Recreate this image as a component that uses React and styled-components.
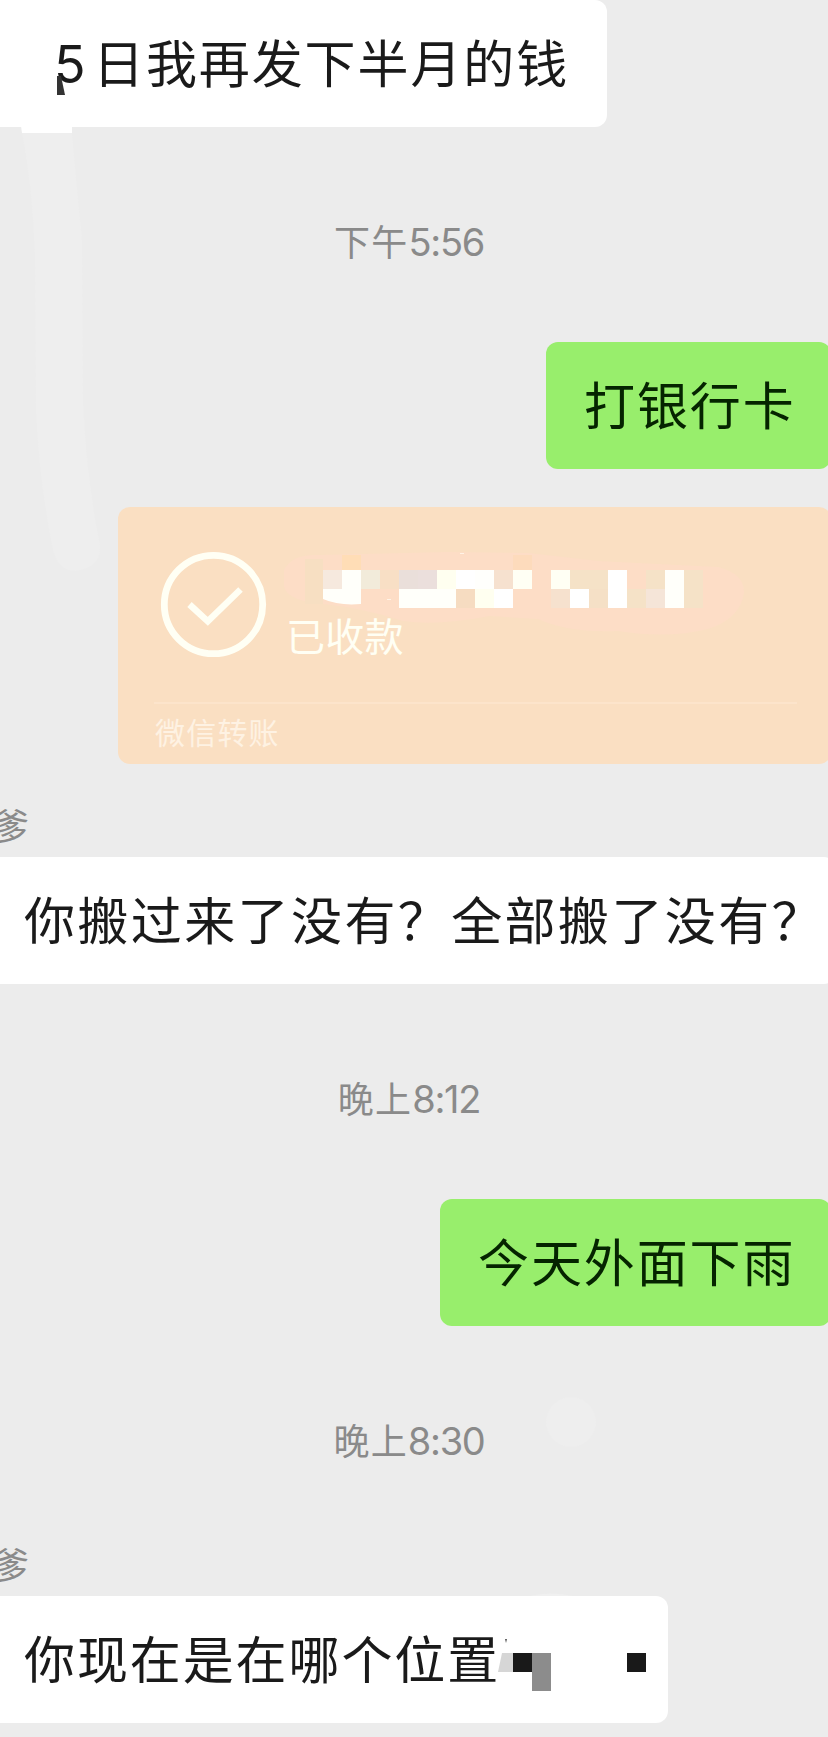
import styled, { createGlobalStyle } from "styled-components";

const GlobalStyles = createGlobalStyle`
  *,
  *::before,
  *::after {
    box-sizing: border-box;
  }

  body {
    margin: 0;
    background-color: #ececec;
    overflow: hidden;
  }
`;

const Chat = styled.main`
  position: relative;
  display: flex;
  flex-direction: column;
  width: 828px;
  height: 1737px;
  overflow: hidden;
  background-color: #ececec;
  font-family: "Noto Sans CJK SC", sans-serif;
`;

const Row = styled.div`
  display: flex;
  flex-shrink: 0;
  justify-content: ${(props) => (props.$mine ? "flex-end" : "flex-start")};
  margin-right: ${(props) => (props.$mine ? "-3px" : "0")};
  margin-bottom: ${(props) => props.$gap || 0}px;
`;

const Bubble = styled.div`
  position: relative;
  flex-shrink: 0;
  display: flex;
  align-items: center;
  height: 127px;
  width: ${(props) => props.$width}px;
  padding: 0 0 5px ${(props) => props.$indent ?? 38}px;
  border-radius: ${(props) => (props.$mine ? "12px" : "0 12px 12px 0")};
  background-color: ${(props) => (props.$mine ? "#98ee6c" : "#fff")};
  color: ${(props) => (props.$mine ? "#052400" : "#1a1a1a")};
  font-size: 51px;
  line-height: 76px;
  letter-spacing: ${(props) => props.$spacing ?? 1.9}px;
  white-space: nowrap;
`;

const Digit = styled.span`
  width: 38px;
  padding-top: 8px;
  font-family: Inter, sans-serif;
  font-size: 52px;
  letter-spacing: 0;
  text-indent: -1px;
`;

const Time = styled.time`
  display: flex;
  flex-shrink: 0;
  align-items: center;
  justify-content: center;
  height: 215px;
  padding: 11px 10px 0 0;
  color: #8a8a8a;
  font-size: 36px;
  letter-spacing: 1.2px;
`;

const Clock = styled.span`
  padding-top: 4px;
  font-family: Inter, sans-serif;
  font-size: 38px;
  letter-spacing: -1.3px;
`;

const Name = styled.div`
  flex-shrink: 0;
  height: 55px;
  margin-left: -7px;
  color: #8a8a8a;
  font-size: 36px;
  line-height: 44px;
`;

const Transfer = styled.div`
  position: relative;
  display: flex;
  flex-direction: column;
  width: 713px;
  height: 257px;
  padding: 0 34px 0 36px;
  border-radius: 12px;
  background-color: #fadfc2;
`;

const TransferBody = styled.div`
  display: flex;
  height: 195px;
  padding: 44px 0 0 6px;
  gap: 19px;
`;

const Status = styled.p`
  margin: 54px 0 0;
  color: #fffff4;
  font-size: 39px;
  line-height: 58px;
  letter-spacing: 0.3px;
`;

const TransferLabel = styled.div`
  border-top: 2px solid #fce4cb;
  padding: 4px 0 0 1px;
  color: #fef2e3;
  font-size: 30px;
  line-height: 46px;
  letter-spacing: 1.2px;
`;

const Overlay = styled.svg`
  position: absolute;
  top: 0;
  left: 0;
  overflow: visible;
  pointer-events: none;
`;

// [column, row, colour], each tile is 19px
const tiles = [
  [0, 0, "#f6e9de"],
  [1, 0, "#fffffa"],
  [2, 0, "#f2ebda"],
  [3, 0, "#f8dfc5"],
  [4, 0, "#eadfda"],
  [5, 0, "#ebdfdc"],
  [6, 0, "#fffff0"],
  [7, 0, "#ffffff"],
  [8, 0, "#fffffc"],
  [9, 0, "#f6e1cf"],
  [10, 0, "#fffff4"],
  [12, 0, "#fffff4"],
  [13, 0, "#f5e2c7"],
  [14, 0, "#f5e2c7"],
  [15, 0, "#ffffff"],
  [17, 0, "#f5e2c7"],
  [18, 0, "#fffffa"],
  [19, 0, "#f5e2c7"],
  [4, 1, "#fffffa"],
  [5, 1, "#fffffa"],
  [6, 1, "#fffffa"],
  [7, 1, "#f6dcc1"],
  [8, 1, "#fffff0"],
  [9, 1, "#ffffff"],
  [12, 1, "#f6e1ce"],
  [13, 1, "#ffffff"],
  [14, 1, "#f5e0c6"],
  [15, 1, "#ffffff"],
  [16, 1, "#f5e2c7"],
  [17, 1, "#f5e5d8"],
  [18, 1, "#fffffa"],
  [19, 1, "#f5e2c7"],
];

const AmountMask = () => (
  <Overlay width="713" height="257" viewBox="0 0 713 257">
    <path
      d="M166 63 Q174 47 200 48 L330 45 L410 46 L480 54 L600 60 Q627 67 626 86 Q622 112 590 122 Q550 132 500 124 Q450 126 420 112 L372 109 Q320 119 285 114 Q245 101 205 97 Q170 94 166 80 Z"
      fill="#fdddc6"
    />
    <rect x="187" y="52" width="18" height="45" fill="#f7dfc2" />
    <rect x="224" y="48" width="19" height="15" fill="#ffddb6" />
    <rect x="395" y="48" width="19" height="15" fill="#fddbbc" />
    {tiles.map(([col, row, fill]) => (
      <rect
        key={`${col}-${row}`}
        x={205 + col * 19}
        y={63 + row * 19}
        width="19"
        height="19"
        fill={fill}
      />
    ))}
    <path d="M205 82h38v15q-22 2-38-5Z" fill="#fffffa" />
    <path d="M342 46.5h4M269 92.5h4" stroke="#fff3e6" />
  </Overlay>
);

const CheckIcon = () => (
  <svg width="107" height="107" viewBox="0 0 107 107" fill="none">
    <circle cx="53.5" cy="53.5" r="49.2" stroke="#fffff4" strokeWidth="6.8" />
    <path d="M29.5 53.5 47.8 70.3 80.5 38.5" stroke="#fffff4" strokeWidth="6.5" />
  </svg>
);

const App = () => {
  return (
    <>
      <GlobalStyles />
      <Chat>
        <Row>
          <Bubble $width={607} $indent={55}>
            <Digit>5</Digit>日我再发下半月的钱
            <Overlay width="607" height="134">
              <path d="M57 76h4l4 19h-8Z" fill="#333" />
              <path d="M21 126h51v7H22Z" fill="#fff" />
            </Overlay>
          </Bubble>
        </Row>

        <Time>
          下午<Clock>5:56</Clock>
        </Time>

        <Row $mine $gap={38}>
          <Bubble $mine $width={285}>
            打银行卡
          </Bubble>
        </Row>

        <Row $mine $gap={38}>
          <Transfer>
            <AmountMask />
            <TransferBody>
              <CheckIcon />
              <Status>已收款</Status>
            </TransferBody>
            <TransferLabel>微信转账</TransferLabel>
          </Transfer>
        </Row>

        <Name>爹</Name>
        <Row>
          <Bubble $width={836} $indent={24} $spacing={2.4}>
            你搬过来了没有？全部搬了没有？
          </Bubble>
        </Row>

        <Time>
          晚上<Clock>8:12</Clock>
        </Time>

        <Row $mine>
          <Bubble $mine $width={391}>
            今天外面下雨
          </Bubble>
        </Row>

        <Time>
          晚上<Clock>8:30</Clock>
        </Time>

        <Name>爹</Name>
        <Row>
          <Bubble $width={668} $indent={24}>
            你现在是在哪个位置
            <Overlay width="668" height="127">
              <path d="M505 43h2l-1 4Z" fill="#555" />
              <path d="M502 57h11v19h-15Z" fill="#d6d6d6" />
              <path d="M513 57h19v19h-19ZM627 57h19v19h-19Z" fill="#191919" />
              <path d="M532 57h19v38h-19Z" fill="#8c8c8c" />
            </Overlay>
          </Bubble>
        </Row>

        {/* faint brush marks on the background */}
        <Overlay width="828" height="1737">
          <path
            d="M22 133 Q33 190 35 260 L36 410 Q39 480 52 545 Q56 571 75 571 Q102 568 100 545 Q86 475 83 400 L82 240 Q77 190 72 133Z"
            fill="#eeeeee"
          />
          <circle cx="571" cy="1422" r="25" fill="#eeeeee" />
          <path d="M530 1596q20-5 43 0Z" fill="#f0f0f0" />
        </Overlay>
      </Chat>
    </>
  );
};

export default App;
